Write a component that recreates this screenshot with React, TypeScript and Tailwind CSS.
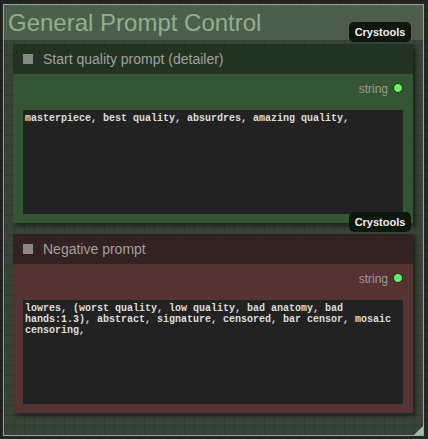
interface BadgeProps {
    top: string;
}

interface NodeProps {
    title: string;
    text: string;
    head: string;
    body: string;
}

function Badge({ top }: BadgeProps) {
    return (
        <div className={`absolute ${top} left-[349px] h-[20px] w-[62px] rounded-[5px] bg-[#0e180e] flex items-center justify-center text-[11px] font-bold text-[#eee]`}>
            Crystools
        </div>
    )
}

function Node({ title, text, head, body }: NodeProps) {
    return (
        <div className="w-[400px] shadow-[3px_3px_4px_rgba(0,0,0,0.45)]">
            <div className={`${head} h-[30px] flex items-center gap-[10px] pl-[10px]`}>
                <div className="w-[10px] h-[10px] bg-[#888]" />
                <span className="text-[14px] text-[#a0a0a0]">{title}</span>
            </div>
            <div className={`${body} px-[10px] pb-[9px]`}>
                <div className="h-[36px] flex items-start justify-end gap-[5px] pt-[9px]">
                    <span className="text-[12px] leading-[12px] text-[#999]">string</span>
                    <div className="w-[10px] h-[10px] rounded-full bg-[#66f266] border border-[#1c2a1c]" />
                </div>
                <div className="h-[104px] bg-[#222] px-[2px] pt-[3px] text-[10px] leading-[11px] font-bold text-[#ddd] font-['Liberation_Mono',monospace] break-words">
                    {text}
                </div>
            </div>
        </div>
    )
}

export default function App() {
    return (
        <div className="relative w-[428px] h-[439px] overflow-hidden bg-[#262626] bg-[linear-gradient(rgba(0,0,0,0.18)_1px,transparent_1px),linear-gradient(90deg,rgba(0,0,0,0.18)_1px,transparent_1px)] bg-[size:10px_10px] font-['Liberation_Sans',Arial,sans-serif] pt-[4px] pl-[3px]">
            <div className="relative w-[421px] h-[432px] border border-[#8fae8f] bg-[#3a483a]/90 bg-[linear-gradient(rgba(0,0,0,0.12)_1px,transparent_1px),linear-gradient(90deg,rgba(0,0,0,0.12)_1px,transparent_1px)] bg-[size:10px_10px]">
                <div className="h-[35px] bg-[#4d5e4d] flex items-center pl-[4px]">
                    <span className="text-[24px] leading-none text-[#8fb08f]">General Prompt Control</span>
                </div>
                <div className="flex flex-col gap-[11px] pl-[9px] pt-[4px]">
                    <Node
                        title="Start quality prompt (detailer)"
                        text="masterpiece, best quality, absurdres, amazing quality,"
                        head="bg-[#223322]"
                        body="bg-[#335533]"
                    />
                    <Node
                        title="Negative prompt"
                        text="lowres, (worst quality, low quality, bad anatomy, bad hands:1.3), abstract, signature, censored, bar censor, mosaic censoring,"
                        head="bg-[#332222]"
                        body="bg-[#553333]"
                    />
                </div>
                <div className="absolute right-0 bottom-0 w-[9px] h-[9px] bg-[#9fc09f] [clip-path:polygon(100%_0,100%_100%,0_100%)]" />
            </div>
            <Badge top="top-[22px]" />
            <Badge top="top-[212px]" />
        </div>
    )
}
